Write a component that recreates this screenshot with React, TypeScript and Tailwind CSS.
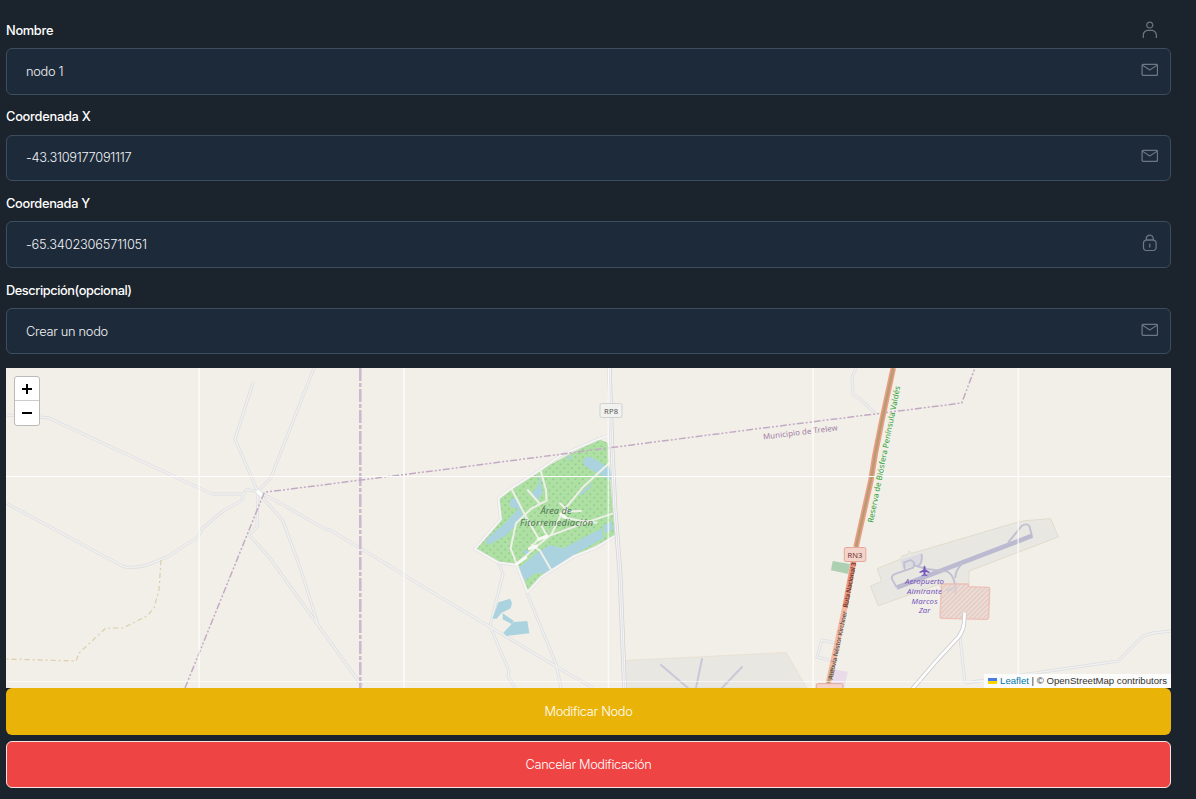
import type { ReactNode } from "react";

const MAIL = [
  "M19.2516 3.30005H2.75156C1.58281 3.30005 0.585938 4.26255 0.585938 5.46567V16.6032C0.585938 17.7719 1.54844 18.7688 2.75156 18.7688H19.2516C20.4203 18.7688 21.4172 17.8063 21.4172 16.6032V5.4313C21.4172 4.26255 20.4203 3.30005 19.2516 3.30005ZM19.2516 4.84692C19.2859 4.84692 19.3203 4.84692 19.3547 4.84692L11.0016 10.2094L2.64844 4.84692C2.68281 4.84692 2.71719 4.84692 2.75156 4.84692H19.2516ZM19.2516 17.1532H2.75156C2.40781 17.1532 2.13281 16.8782 2.13281 16.5344V6.35942L10.1766 11.5157C10.4172 11.6875 10.6922 11.7563 10.9672 11.7563C11.2422 11.7563 11.5172 11.6875 11.7578 11.5157L19.8016 6.35942V16.5688C19.8703 16.9125 19.5953 17.1532 19.2516 17.1532Z",
];
const USER = [
  "M11.0008 9.52185C13.5445 9.52185 15.607 7.5281 15.607 5.0531C15.607 2.5781 13.5445 0.584351 11.0008 0.584351C8.45703 0.584351 6.39453 2.5781 6.39453 5.0531C6.39453 7.5281 8.45703 9.52185 11.0008 9.52185ZM11.0008 2.1656C12.6852 2.1656 14.0602 3.47185 14.0602 5.08748C14.0602 6.7031 12.6852 8.00935 11.0008 8.00935C9.31641 8.00935 7.94141 6.7031 7.94141 5.08748C7.94141 3.47185 9.31641 2.1656 11.0008 2.1656Z",
  "M13.2352 11.0687H8.76641C5.08828 11.0687 2.09766 14.0937 2.09766 17.7719V20.625C2.09766 21.0375 2.44141 21.4156 2.88828 21.4156C3.33516 21.4156 3.67891 21.0719 3.67891 20.625V17.7719C3.67891 14.9531 5.98203 12.6156 8.83516 12.6156H13.2695C16.0883 12.6156 18.4258 14.9187 18.4258 17.7719V20.625C18.4258 21.0375 18.7695 21.4156 19.2164 21.4156C19.6633 21.4156 20.007 21.0719 20.007 20.625V17.7719C19.9039 14.0937 16.9133 11.0687 13.2352 11.0687Z",
];
const LOCK = [
  "M16.1547 6.80626V5.91251C16.1547 3.16251 14.0922 0.825009 11.4797 0.618759C10.0359 0.481259 8.59219 0.996884 7.52656 1.95938C6.46094 2.92188 5.84219 4.29688 5.84219 5.70626V6.80626C3.84844 7.18438 2.33594 8.93751 2.33594 11.0688V17.2906C2.33594 19.5594 4.19219 21.3813 6.42656 21.3813H15.5016C17.7703 21.3813 19.6266 19.525 19.6266 17.2563V11C19.6609 8.93751 18.1484 7.21876 16.1547 6.80626ZM8.55781 3.09376C9.31406 2.40626 10.3109 2.06251 11.3422 2.16563C13.1641 2.33751 14.6078 3.98751 14.6078 5.91251V6.70313H7.38906V5.67188C7.38906 4.70938 7.80156 3.78126 8.55781 3.09376ZM18.1141 17.2906C18.1141 18.7 16.9453 19.8688 15.5359 19.8688H6.46094C5.05156 19.8688 3.91719 18.7344 3.91719 17.325V11.0688C3.91719 9.52189 5.15469 8.28438 6.70156 8.28438H15.2953C16.8422 8.28438 18.1141 9.52188 18.1141 11V17.2906Z",
  "M10.9977 11.8594C10.5852 11.8594 10.207 12.2031 10.207 12.65V16.2594C10.207 16.6719 10.5508 17.05 10.9977 17.05C11.4102 17.05 11.7883 16.7063 11.7883 16.2594V12.6156C11.7883 12.2031 11.4102 11.8594 10.9977 11.8594Z",
];

function FieldIcon({ paths }: { paths: string[] }) {
  return (
    <svg className="h-[17.6px] w-[17.6px] fill-[#aeb7c0] opacity-55" viewBox="0 0 22 22">
      {paths.map((d) => (
        <path key={d} d={d} />
      ))}
    </svg>
  );
}

type FieldProps = {
  label: string;
  value: string;
  icon: string[];
  labelTracking: string;
  valueTracking: string;
  labelIcon?: ReactNode;
};

function Field({ label, value, icon, labelTracking, valueTracking, labelIcon }: FieldProps) {
  return (
    <div className="mb-[12.7px]">
      <div className="mb-2 flex h-[19.2px] items-start justify-between pr-[12.8px]">
        <label className={`text-[12.8px] leading-[19.2px] font-medium text-white ${labelTracking}`}>{label}</label>
        {labelIcon}
      </div>
      <div className="flex h-[46.7px] items-start justify-between rounded-[6px] border border-[#3d4d60] bg-[#1d2a39] pr-[11.8px] pl-[19px]">
        <span className={`self-center text-[12.8px] leading-[19px] font-light text-[#f2f4f7] ${valueTracking}`}>{value}</span>
        <span className="pt-[11.8px]">
          <FieldIcon paths={icon} />
        </span>
      </div>
    </div>
  );
}

const MINOR_ROADS = [
  "M6 415L32 416.500L48 417.700L212 494L243 494L247 489.500L257 491.500",
  "M253.300 381.700L235 439L257 490",
  "M314 368L270.700 478L259 490",
  "M6 503L123 566.500Q133 569 147 565L167 557L190 542L197 538L203 528L223 511L241 501L244 493",
  "M257 492L269 497L325 529L330 530L393 568L440 597L490 627L557 667L593 688",
  "M262 497L283 521L302 573L318 625",
  "M258 493L257 527L249 535L269 557L318 625L362 686",
  "M498 562L503 574L490 626L509 671L508 676L515 688",
  "M527 593L556 664L561 688",
  "M856 368L852 377L853 395L860 399L876 414",
  "M1171 631L1153 633L1143 636L1118 661L965 683",
  "M960 637L965 683",
  "M836 643L822 640L817 657L832 661",
];

function MapDrawing() {
  return (
    <svg className="block h-full w-full" viewBox="6 368 1165 320" fontFamily='"Noto Sans", "Open Sans", sans-serif'>
      <defs>
        <pattern id="trees" width="7.4" height="7.4" patternUnits="userSpaceOnUse">
          <rect width="7.4" height="7.4" fill="#aedfa3" />
          <circle cx="2" cy="2" r="0.8" fill="#8cc488" />
          <circle cx="5.700" cy="5.700" r="0.800" fill="#8cc488" />
        </pattern>
        <pattern id="hatch" width="10" height="10" patternUnits="userSpaceOnUse" patternTransform="rotate(45)">
          <rect width="10" height="10" fill="#ebddd5" />
          <rect width="4" height="10" fill="#e4cac4" />
        </pattern>
      </defs>
      <rect x="6" y="368" width="1165" height="320" fill="#f2efe9" />

      <path d="M625 660.500L786 652.500L807 688H625Z" fill="#e8e7e2" stroke="#e6dccb" strokeWidth="0.700" />
      <path d="M661 665L688 688M702 659L696 688M742 667L720 690" fill="none" stroke="#c9c8d8" strokeWidth="2" strokeLinecap="round" />

      <g fill="none" strokeLinejoin="round">
        {MINOR_ROADS.map((d) => (
          <path key={d} d={d} stroke="#dcdee1" strokeWidth="3" />
        ))}
        {MINOR_ROADS.map((d) => (
          <path key={d} d={d} stroke="#f1f0ee" strokeWidth="1.500" />
        ))}
        <path d="M161 560L159 590L154 608L147 616L123 628L106 628L79 653L76 661L6 659" stroke="#dccdaa" strokeWidth="1.200" strokeDasharray="5 3 2 3" />
        <path d="M257 491L263 496" stroke="#fff" strokeWidth="3" />
      </g>

      <path d="M598.300 439L607.700 442.700L609 463L613 513L615 536L573 556.700L541.700 576.700L527.300 592.300L516.700 565L498 562.700L476 549L500.700 519.300L498.300 498.300L540 470Z" fill="url(#trees)" />
      <g transform="translate(470 430) scale(.333333)">
        <g fill="#aad3df">
          <path d="M338 95L345 83L362 80L420 115L424 150L395 138L345 108ZM208 130L218 190L200 212L182 195L205 165ZM120 210L138 202L160 262L110 315L55 346L48 330L75 305L105 280L145 237L120 230ZM292 76h10v13h-10ZM325 195L365 158L360 175L335 195ZM156 365L168 358L182 375L170 375Z" />
          <path d="M145 415L205 365L240 345L280 355L395 295L400 325L320 370L270 405L240 430L195 430L165 453ZM400 285L425 275L430 300L402 310Z" />
          <path d="M85 517L120 506L126 518L122 535L95 548L80 566H67ZM98 550L110 558L132 573L125 582L98 568ZM100 608L122 585L132 576L172 573L178 610L110 618Z" />
        </g>
      </g>

      <g transform="translate(470 430) scale(.333333)" fill="none" strokeLinejoin="round" strokeLinecap="round">
        <path d="M435 318L380 352L310 380L215 440L172 487L140 405L85 398L14 357L60 305L92 268L85 205L120 178L210 120L270 77L385 27L425 15" stroke="#dfdfe0" strokeWidth="9" />
        <path d="M435 318L380 352L310 380L215 440L172 487L140 405L85 398L14 357L60 305L92 268L85 205L120 178L210 120L270 77L385 27L425 15" stroke="#f7f6f5" strokeWidth="5.500" />
        <path d="M420 97L340 170L278 245L245 312L205 345L140 402L122 355L138 280L185 235L230 212L228 180L212 122M125 178L172 268L208 330M430 250L340 280L232 320L205 328L178 356M173 180L210 222M278 245L333 243M270 220L290 238M210 280L228 312M185 345L210 362L245 422M278 262L320 270L380 278" stroke="#eef0e8" strokeWidth="6" />
        <path d="M272 252L286 262M140 402L168 382M205 328L232 318M178 356L200 348" stroke="#f8f8f4" strokeWidth="9" />
      </g>

      <g fill="none" strokeLinejoin="round">
        <path d="M609.300 368L611.300 433L615 510L620 573L624.500 688" stroke="#cfd0d2" strokeWidth="4.600" />
        <path d="M609.300 368L611.300 433L615 510L620 573L624.500 688" stroke="#f4f4f4" strokeWidth="3.200" />
        <path d="M609.300 368L611.300 433L615 510L620 573L624.500 688" stroke="#d9d9dc" strokeWidth="0.700" />
      </g>

      <g transform="translate(780 500) scale(.333333)" fill="none" strokeLinejoin="round">
        <path d="M292 206L360 178L366 168L385 162L388 152L394 160L430 150L700 70L735 62L812 56L835 111L567 213V262H480V252L295 317L271 258L305 244Z" fill="#e8e7e2" stroke="#e0dccb" strokeWidth="3" />
        <path d="M362 180L425 160L428 185L415 198L368 205Z" fill="#dcdbe2" />
        <path d="M350 263L757 107" stroke="#bcbad0" strokeWidth="14" />
        <path d="M350 262L335 235Q335 225 348 221L400 203L403 188L392 180L372 188L374 208M400 195L440 207L500 214Q527 225 526 280M425 162Q428 190 415 197M526 235Q525 210 548 190M684 128L725 78Q740 68 748 78L756 107" stroke="#c1bfd2" strokeWidth="5.500" />
        <path d="M485 252H565V260L625 262Q630 262 629 270L626 352Q625 358 618 358L485 355Q480 355 480 348Z" fill="url(#hatch)" stroke="#edbfb6" strokeWidth="4" />
        <path d="M526 248V280M500 272L518 266" stroke="#cfc6d4" strokeWidth="8" opacity="0.600" />
        <path d="M554 338L552 370Q550 390 538 408L470 482L390 575" stroke="#cbcbcd" strokeWidth="13" />
        <path d="M554 338L552 370Q550 390 538 408L470 482L390 575" stroke="#fff" strokeWidth="8" />
        <path d="M158 183L210 192L205 222L153 211Z" fill="#add0b3" />
        <path d="M160 508L204 515L193 564H145Z" fill="#e9dbe8" />
      </g>

      <g fill="none" stroke="#c3aac4">
        <path d="M360.300 368V688" strokeWidth="2.600" strokeDasharray="13 2 4 2" stroke="#cdb9cd" />
        <path d="M185 688L264.300 492.300L440 470L600 449L740 431L961.700 403L975 368" strokeWidth="1.500" strokeDasharray="7 2 2 2 2 2" />
      </g>

      <g fill="none" strokeLinejoin="round">
        <path d="M893.300 368L882 420L875 455L871 480L856 547" stroke="#eb9d84" strokeWidth="5.600" />
        <path d="M893.300 368L882 420L875 455L871 480L856 547" stroke="#b79c73" strokeWidth="2.400" />
        <path d="M854 558L845 607L828 685" stroke="#f3b8a2" strokeWidth="5.500" />
        <path d="M832 668L828 685" stroke="#b79c73" strokeWidth="3" />
        <path d="M854 560L845 607" stroke="#e9937e" strokeWidth="5" />
      </g>

      <g stroke="#fff" fill="none">
        <path d="M199.200 368V688M403.900 368V688M608.400 368V688M813.200 368V688M1018.200 368V688" strokeWidth="1.700" opacity="0.650" />
        <path d="M6 476.500H1171" strokeWidth="1" />
        <path d="M6 681.500H1171" strokeWidth="1.200" opacity="0.600" />
      </g>

      <rect x="600" y="403.500" width="22" height="14" rx="1.500" fill="#f1f1ef" stroke="#cfd2d0" />
      <text x="611" y="413.500" fontSize="7.600" textAnchor="middle" textLength="14" fill="#555">RP8</text>
      <rect x="844.300" y="547.500" width="21.500" height="14" rx="1.500" fill="#f3d3ca" stroke="#e3aa9c" />
      <text x="855" y="557.700" fontSize="7.600" textAnchor="middle" fill="#70372f">RN3</text>
      <rect x="816.300" y="683.700" width="26.500" height="14" rx="1.500" fill="#f3d3ca" stroke="#e3aa9c" />

      <g fontStyle="italic" fill="#53745a" textAnchor="middle">
        <text x="556" y="514" fontSize="9.200" textLength="31">Área de</text>
        <text x="556.500" y="525.500" fontSize="9.200" textLength="73">Fitorremediación</text>
      </g>
      <text transform="translate(763.500 439.500) rotate(-7)" fontSize="7.800" textLength="75" fill="#a07ba2">Municipio de Trelew</text>
      <text transform="translate(873 523) rotate(-78.700)" fontSize="7.800" textLength="139" fill="#2da233">Reserva de Biósfera Península Valdés</text>
      <text transform="translate(847.500 608) rotate(-79)" fontSize="6.500" textLength="46" fontWeight="600" fill="#65392e">Ruta Nacional 3</text>
      <text transform="translate(832.500 680) rotate(-78)" fontSize="6.500" textLength="70" fontWeight="500" fill="#565552">Autovía Néstor Kirchner</text>

      <g fontStyle="italic" fontSize="7.800" fill="#7655bd" textAnchor="middle">
        <text x="924.500" y="584.300" textLength="39">Aeropuerto</text>
        <text x="924.500" y="594" textLength="35">Almirante</text>
        <text x="924.500" y="603.500" textLength="26">Marcos</text>
        <text x="924.500" y="613">Zar</text>
      </g>
      <path d="M924.500 565.500Q925.500 566 925.500 568V569.500L929.500 571.800V573L925.500 572V574.200L927.500 575.500V576.200L924.500 575.400L921.500 576.200V575.500L923.500 574.200V572L919.500 573V571.800L923.500 569.500V568Q923.500 566 924.500 565.500Z" fill="#7655bd" />
    </svg>
  );
}

function MapView() {
  return (
    <div className="relative h-80 overflow-hidden">
      <MapDrawing />
      <div className="absolute top-2 left-2 flex h-[50px] w-[26px] flex-col rounded-[3px] border border-[#bcbab7] bg-white">
        <button className="flex h-6 items-center justify-center border-b border-[#ccc] pt-px" aria-label="Zoom in">
          <svg className="h-[10px] w-[10px]" viewBox="0 0 10 10">
            <path d="M5 0V10M0 5H10" stroke="#000" strokeWidth="2" />
          </svg>
        </button>
        <button className="flex h-6 items-center justify-center" aria-label="Zoom out">
          <svg className="h-[10px] w-[10px]" viewBox="0 0 10 10">
            <path d="M0 5H10" stroke="#000" strokeWidth="2" />
          </svg>
        </button>
      </div>
      <div className="absolute right-0 bottom-0 flex h-[14px] w-[187px] items-center justify-end bg-white/80 pr-1 font-['Liberation_Sans',sans-serif] text-[9.6px] leading-[14px] whitespace-pre text-[#333]">
        <svg className="mr-[3px] h-[6px] w-[9px]" viewBox="0 0 9 6">
          <path fill="#4C7BE1" d="M0 0h9v3H0z" />
          <path fill="#FFD500" d="M0 3h9v3H0z" />
        </svg>
        <span className="text-[#0078a8]">Leaflet</span>
        <span> | © OpenStreetMap contributors</span>
      </div>
    </div>
  );
}

export default function App() {
  return (
    <main className="min-h-screen bg-[#1b232c] pt-[20.9px] pr-[25px] pl-[6px] font-['Inter','Liberation_Sans',sans-serif]">
      <Field label="Nombre" value="nodo 1" icon={MAIL} labelTracking="tracking-[-0.3px]" valueTracking="tracking-[-0.3px]" labelIcon={<FieldIcon paths={USER} />} />
      <Field label="Coordenada X" value="-43.3109177091117" icon={MAIL} labelTracking="tracking-[-0.25px]" valueTracking="tracking-[-0.28px]" />
      <Field label="Coordenada Y" value="-65.34023065711051" icon={LOCK} labelTracking="tracking-[-0.3px]" valueTracking="tracking-[-0.19px]" />
      <Field label="Descripción(opcional)" value="Crear un nodo" icon={MAIL} labelTracking="tracking-[-0.44px]" valueTracking="tracking-[-0.28px]" />
      <div className="pt-[0.7px]">
        <MapView />
      </div>
      <button className="block h-[47px] w-full rounded-[6px] bg-[#eab308] pt-px text-[12.8px] font-light tracking-[-0.3px] text-white">Modificar Nodo</button>
      <button className="mt-[6px] block h-[47px] w-full rounded-[6px] border border-[#f4e4e4] bg-[#ef4444] pt-px text-[12.8px] font-light tracking-[-0.36px] text-white">Cancelar Modificación</button>
    </main>
  );
}
